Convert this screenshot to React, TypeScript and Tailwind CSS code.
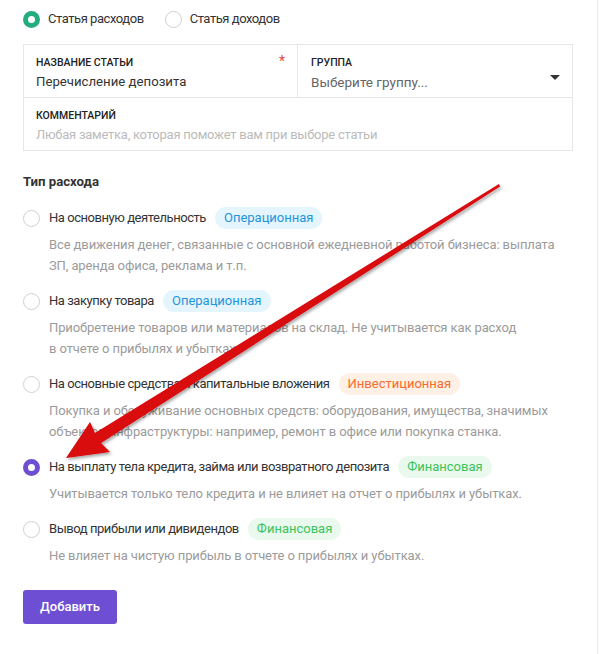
import React from "react";

type Kind = "op" | "inv" | "fin";

const badgeCls: Record<Kind, string> = {
  op: "bg-[#e4f5fe] text-[#1e96dc]",
  inv: "bg-[#fff0e6] text-[#f96b2c]",
  fin: "bg-[#e9f9ed] text-[#3cc35c]",
};

const options: { title: string; badge: string; kind: Kind; lines: string[]; checked?: boolean }[] = [
  {
    title: "На основную деятельность",
    badge: "Операционная",
    kind: "op",
    lines: [
      "Все движения денег, связанные с основной ежедневной работой бизнеса: выплата",
      "ЗП, аренда офиса, реклама и т.п.",
    ],
  },
  {
    title: "На закупку товара",
    badge: "Операционная",
    kind: "op",
    lines: [
      "Приобретение товаров или материалов на склад. Не учитывается как расход",
      "в отчете о прибылях и убытках.",
    ],
  },
  {
    title: "На основные средства и капитальные вложения",
    badge: "Инвестиционная",
    kind: "inv",
    lines: [
      "Покупка и обслуживание основных средств: оборудования, имущества, значимых",
      "объектов инфраструктуры: например, ремонт в офисе или покупка станка.",
    ],
  },
  {
    title: "На выплату тела кредита, займа или возвратного депозита",
    badge: "Финансовая",
    kind: "fin",
    checked: true,
    lines: ["Учитывается только тело кредита и не влияет на отчет о прибылях и убытках."],
  },
  {
    title: "Вывод прибыли или дивидендов",
    badge: "Финансовая",
    kind: "fin",
    lines: ["Не влияет на чистую прибыль в отчете о прибылях и убытках."],
  },
];

const Radio = ({ on, color }: { on?: boolean; color?: string }) =>
  on ? (
    <span className={`w-[17px] h-[17px] rounded-full border-[5px] bg-white shrink-0 ${color}`} />
  ) : (
    <span className="w-[17px] h-[17px] rounded-full border border-[#d0d0d0] bg-white shrink-0" />
  );

// red annotation arrow drawn over the form
const Arrow = () => (
  <svg className="absolute left-0 top-0 pointer-events-none" width="599" height="654">
    <defs>
      <filter id="sh" x="-10%" y="-10%" width="120%" height="120%">
        <feDropShadow dx="1.5" dy="2" stdDeviation="1.5" floodColor="#000" floodOpacity="0.35" />
      </filter>
    </defs>
    <polygon
      filter="url(#sh)"
      fill="#d9070a"
      points="499,184 500,186.5 101,443 110,452 66,458 90,422 95,433"
    />
  </svg>
);

const App = () => {
  return (
    <div
      className="relative w-[598px] min-h-[654px] bg-white border-r border-[#ececec] text-[#333] text-[13px]"
      style={{ fontFamily: "Roboto, 'Noto Sans', sans-serif" }}
    >
      <div className="pl-[23px] pr-[25px] pt-[1px]">
        <div className="flex items-center h-[36px] tracking-[-0.45px]">
          <label className="flex items-center gap-[8px]">
            <Radio on color="border-[#22ae7c]" />
            <span>Статья расходов</span>
          </label>
          <label className="flex items-center gap-[8px] ml-[21px]">
            <Radio />
            <span>Статья доходов</span>
          </label>
        </div>

        <div className="mt-[7px] w-[550px] border border-[#e6e6e6]">
          <div className="flex h-[53px] border-b border-[#e6e6e6]">
            <div className="relative w-[274px] border-r border-[#e6e6e6] pl-[12px] pt-[11px]">
              <div className="text-[10.5px] font-medium uppercase text-[#222] leading-[14px]">Название статьи</div>
              <div className="mt-[2px] leading-[20px] text-[13.2px]">Перечисление депозита</div>
              <span className="absolute right-[12px] top-[6px] text-[#e5493a] text-[14px]">*</span>
            </div>
            <div className="relative flex-1 pl-[13px] pt-[11px]">
              <div className="text-[10.5px] font-medium uppercase text-[#222] leading-[14px]">Группа</div>
              <div className="mt-[2px] leading-[20px] text-[13.5px] text-[#666]">Выберите группу...</div>
              <span className="absolute right-[12px] top-[30px] w-0 h-0 border-l-[5px] border-r-[5px] border-t-[5px] border-l-transparent border-r-transparent border-t-[#333]" />
            </div>
          </div>
          <div className="h-[52px] pl-[12px] pt-[11px]">
            <div className="text-[10.5px] font-medium uppercase text-[#222] leading-[14px]">Комментарий</div>
            <div className="mt-[2px] leading-[20px] text-[#bbb] tracking-[-0.25px]">
              Любая заметка, которая поможет вам при выборе статьи
            </div>
          </div>
        </div>

        <div className="mt-[23px] font-bold text-[13.2px] leading-[16px]">Тип расхода</div>

        <div className="mt-[17px] flex flex-col gap-[14px]">
          {options.map((o) => (
            <div key={o.title}>
              <div className="flex items-center h-[22px]">
                <Radio on={o.checked} color="border-[#6e4ed3]" />
                <span className="ml-[9px] tracking-[-0.45px]">{o.title}</span>
                <span className={`ml-[9px] h-[22px] leading-[22px] px-[9px] rounded-full ${badgeCls[o.kind]}`}>
                  {o.badge}
                </span>
              </div>
              <div className="mt-[5px] pl-[26px] text-[#9b9b9b] leading-[21px] tracking-[-0.1px]">
                {o.lines.map((l) => (
                  <div key={l} className="whitespace-nowrap">{l}</div>
                ))}
              </div>
            </div>
          ))}
        </div>

        <button className="mt-[24px] w-[94px] h-[34px] rounded-[3px] bg-[#6e4ed3] text-white text-[13px] font-medium">
          Добавить
        </button>
      </div>
      <Arrow />
    </div>
  );
};

export default App;
